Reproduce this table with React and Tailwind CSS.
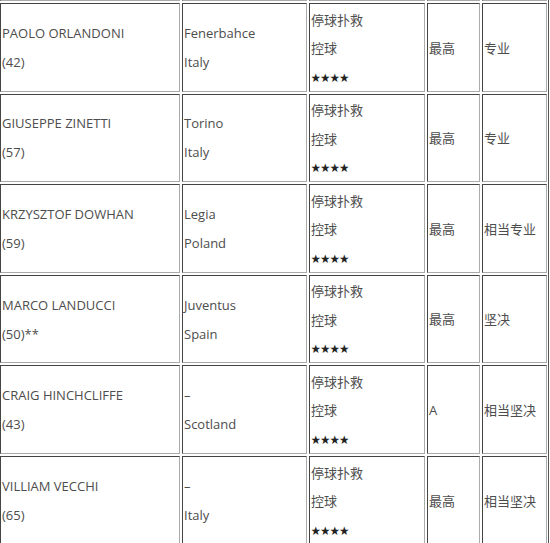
import React from "react";

const rows = [
  { name: "PAOLO ORLANDONI", age: "(42)", club: "Fenerbahce", nation: "Italy", rating: "最高", attitude: "专业" },
  { name: "GIUSEPPE ZINETTI", age: "(57)", club: "Torino", nation: "Italy", rating: "最高", attitude: "专业" },
  { name: "KRZYSZTOF DOWHAN", age: "(59)", club: "Legia", nation: "Poland", rating: "最高", attitude: "相当专业" },
  { name: "MARCO LANDUCCI", age: "(50)**", club: "Juventus", nation: "Spain", rating: "最高", attitude: "坚决" },
  { name: "CRAIG HINCHCLIFFE", age: "(43)", club: "–", nation: "Scotland", rating: "A", attitude: "相当坚决" },
  { name: "VILLIAM VECCHI", age: "(65)", club: "–", nation: "Italy", rating: "最高", attitude: "相当坚决" },
];

const cell =
  "border-t border-l border-t-[#454545] border-l-[#454545] border-b border-r border-b-[#ababab] border-r-[#ababab] px-[1px] flex flex-col justify-center overflow-hidden";

const font = { fontFamily: '"Open Sans", "Noto Sans CJK SC", sans-serif' };

export default function App() {
  return (
    <div className="w-[550px] h-[543px] overflow-hidden bg-white text-[13px] text-[#4d4d4d]" style={font}>
      <div className="w-[549px] border-r border-r-[#555]">
        <div className="grid grid-cols-[180px_125px_116px_53px_65px] gap-x-[2px] gap-y-[2px] grid-rows-[1px_repeat(6,88.6px)]">
          {[0, 1, 2, 3, 4].map((i) => (
            <div key={"p" + i} className="border-b border-b-[#ababab] border-l border-l-[#454545] border-r border-r-[#ababab]" />
          ))}
          {rows.map((r, i) => (
            <React.Fragment key={i}>
              <div className={cell + " pt-[1px]"}>
                <div className="leading-[29px] whitespace-nowrap">{r.name}</div>
                <div className="leading-[29px]">{r.age}</div>
              </div>
              <div className={cell + " pt-[1px]"}>
                <div className="leading-[29px]">{r.club}</div>
                <div className="leading-[29px]">{r.nation}</div>
              </div>
              <div className={cell + " pt-[2px]"}>
                <div className="leading-[28.5px]">停球扑救</div>
                <div className="leading-[28.5px]">控球</div>
                <div className="leading-[28.5px] text-[9.5px] text-[#222]" style={{ fontFamily: '"Noto Sans CJK SC", sans-serif' }}>★★★★</div>
              </div>
              <div className={cell + " pt-[2px]"}>
                <div>{r.rating}</div>
              </div>
              <div className={cell + " pt-[2px]"}>
                <div className="whitespace-nowrap">{r.attitude}</div>
              </div>
            </React.Fragment>
          ))}
        </div>
      </div>
    </div>
  );
}
